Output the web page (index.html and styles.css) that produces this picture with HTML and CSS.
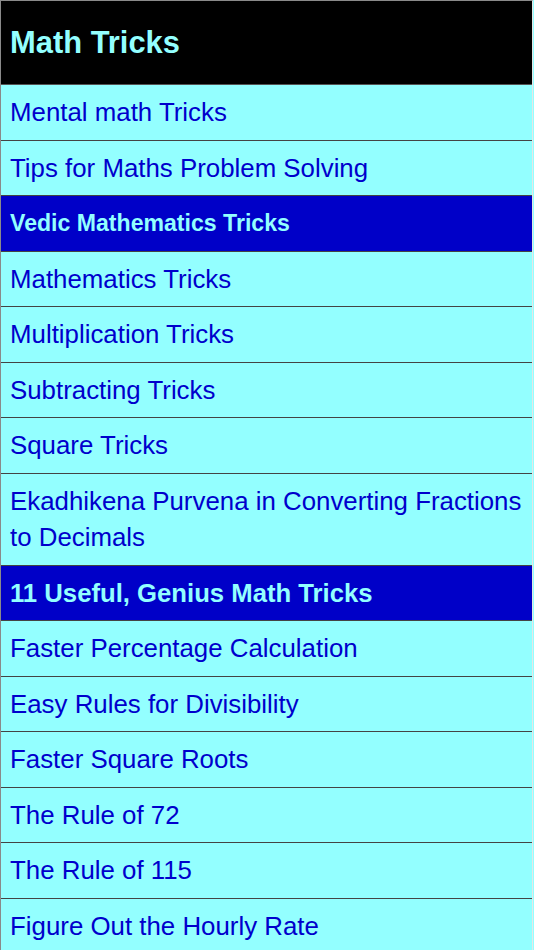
FILE: index.html
```html
<!DOCTYPE html>
<html lang="en">
<head>
<meta charset="utf-8">
<title>Math Tricks</title>
<link rel="stylesheet" href="styles.css">
</head>
<body>
<div class="list">
  <div class="title">Math Tricks</div>
  <div class="row">Mental math Tricks</div>
  <div class="row">Tips for Maths Problem Solving</div>
  <div class="row section small">Vedic Mathematics Tricks</div>
  <div class="row">Mathematics Tricks</div>
  <div class="row">Multiplication Tricks</div>
  <div class="row">Subtracting Tricks</div>
  <div class="row">Square Tricks</div>
  <div class="row">Ekadhikena Purvena in Converting Fractions to Decimals</div>
  <div class="row section">11 Useful, Genius Math Tricks</div>
  <div class="row">Faster Percentage Calculation</div>
  <div class="row">Easy Rules for Divisibility</div>
  <div class="row">Faster Square Roots</div>
  <div class="row">The Rule of 72</div>
  <div class="row">The Rule of 115</div>
  <div class="row">Figure Out the Hourly Rate</div>
</div>
</body>
</html>
```
FILE: styles.css
```css
html, body {
  margin: 0;
  padding: 0;
  background: #93ffff;
}
body {
  font-family: "Liberation Sans", Arial, sans-serif;
  overflow: hidden;
}
.list {
  width: 531px;
  border-top: 1px solid #8a8a8a;
  border-left: 1px solid #8a8a8a;
  border-right: 1px solid #e6e6e6;
  display: flex;
  flex-direction: column;
}
.title {
  height: 83px;
  background: #000;
  color: #93ffff;
  font-weight: bold;
  font-size: 30.9px;
  display: flex;
  align-items: center;
  padding-left: 9px;
  border-bottom: 1px solid #555;
}
.row {
  padding: 9px 9px;
  line-height: 36.5px;
  font-size: 25.85px;
  color: #0000cc;
  border-bottom: 1px solid #444;
}
.row.section {
  background: #0000c8;
  color: #93ffff;
  font-weight: bold;
  font-size: 25.7px;
}
.row.section.small {
  font-size: 23.1px;
}
```
